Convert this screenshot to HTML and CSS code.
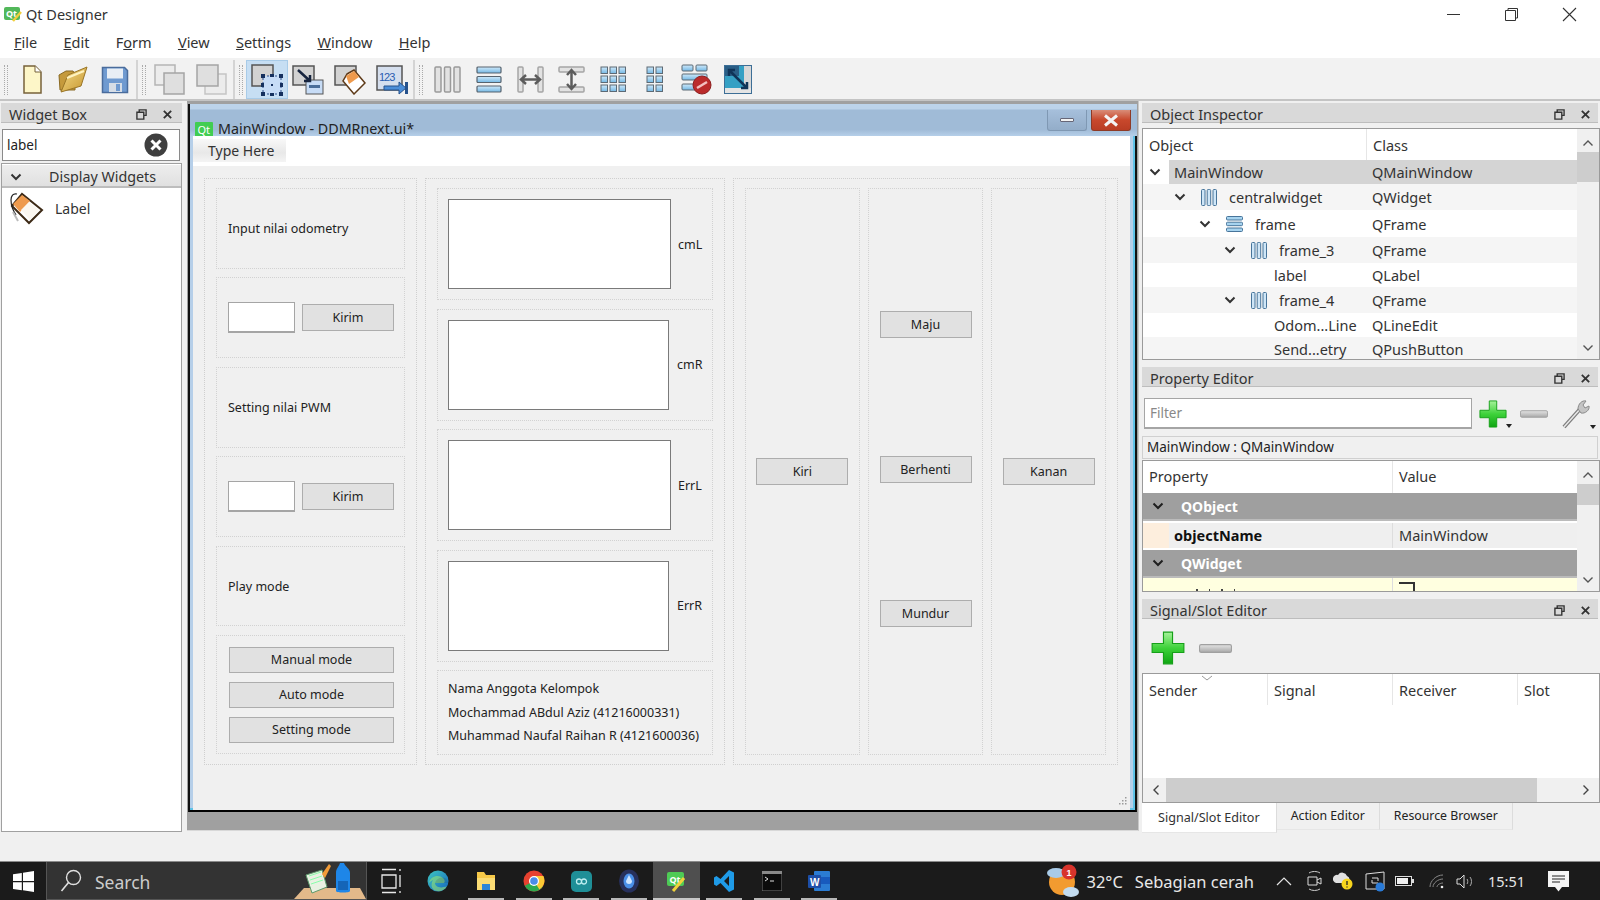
FILE: index.html
```html
<!DOCTYPE html>
<html lang="en">
<head>
<meta charset="utf-8">
<title>Qt Designer</title>
<link rel="stylesheet" href="styles.css">
</head>
<body>
<svg class="defs" aria-hidden="true">
  <defs>
    <linearGradient id="gGreen" x1="0" y1="0" x2="0" y2="1"><stop offset="0" stop-color="#a6f29a"/><stop offset=".5" stop-color="#3ed23a"/><stop offset="1" stop-color="#0fa512"/></linearGradient>
    <linearGradient id="gBar" x1="0" y1="0" x2="0" y2="1"><stop offset="0" stop-color="#e4e4e4"/><stop offset="1" stop-color="#a8a8a8"/></linearGradient>
    <linearGradient id="gBlue" x1="0" y1="0" x2="0" y2="1"><stop offset="0" stop-color="#cfe9fa"/><stop offset="1" stop-color="#74b8e4"/></linearGradient>
    <linearGradient id="gFold" x1="0" y1="0" x2="1" y2="1"><stop offset="0" stop-color="#f5dc8a"/><stop offset="1" stop-color="#c6952d"/></linearGradient>
    <linearGradient id="gEdge" x1="0" y1="0" x2="1" y2="1"><stop offset="0" stop-color="#3ec7c0"/><stop offset="1" stop-color="#1565c0"/></linearGradient>
    <symbol id="i-plus" viewBox="0 0 30 30"><path d="M11 1h8v10h10v8H19v10h-8V19H1v-8h10z" fill="url(#gGreen)" stroke="#16a018"/></symbol>
    <symbol id="i-minus" viewBox="0 0 30 8"><rect x=".5" y=".5" width="29" height="7" rx="1.5" fill="url(#gBar)" stroke="#a0a0a0"/></symbol>
    <symbol id="i-chev" viewBox="0 0 12 8"><path d="M1.5 1.5 6 6l4.500-4.500" fill="none" stroke="#333" stroke-width="2"/></symbol>
    <symbol id="i-up" viewBox="0 0 12 8"><path d="M1.5 6.5 6 2l4.500 4.500" fill="none" stroke="#555" stroke-width="1.4"/></symbol>
    <symbol id="i-down" viewBox="0 0 12 8"><path d="M1.5 1.5 6 6l4.500-4.500" fill="none" stroke="#555" stroke-width="1.4"/></symbol>
    <symbol id="i-left" viewBox="0 0 8 12"><path d="M6.5 1.5 2 6l4.500 4.500" fill="none" stroke="#444" stroke-width="1.4"/></symbol>
    <symbol id="i-right" viewBox="0 0 8 12"><path d="M1.5 1.5 6 6l-4.500 4.500" fill="none" stroke="#444" stroke-width="1.4"/></symbol>
    <symbol id="i-float" viewBox="0 0 12 12"><path d="M3.500 3V1h7.500v6H9M1 3.500h7.500V11H1z" fill="none" stroke="#333" stroke-width="1.500"/></symbol>
    <symbol id="i-close" viewBox="0 0 12 12"><path d="M2 2l8 8M10 2l-8 8" fill="none" stroke="#333" stroke-width="2"/></symbol>
    <symbol id="i-hl" viewBox="0 0 16 17"><g fill="#cfe6f7" stroke="#47749a"><rect x=".5" y=".5" width="3.500" height="16" rx="1"/><rect x="6.200" y=".5" width="3.500" height="16" rx="1"/><rect x="12" y=".5" width="3.500" height="16" rx="1"/></g></symbol>
    <symbol id="i-vl" viewBox="0 0 17 16"><g fill="#a6d3ef" stroke="#47749a"><rect x=".5" y=".5" width="16" height="3.500" rx="1"/><rect x=".5" y="6.200" width="16" height="3.500" rx="1"/><rect x=".5" y="12" width="16" height="3.500" rx="1"/></g></symbol>
    <symbol id="i-tag" viewBox="0 0 36 36"><path d="M4 16 14 4 34 20 21 33z" fill="#fff" stroke="#3d2a16" stroke-width="2"/><path d="M5 14 14 5 22 11 12 22z" fill="#ee9a4d"/><path d="M13 20 21 12 31 20 22 30z" fill="#fbf7f0"/><path d="M9 4C5 3 3 6 3 10s1 9 5 15" fill="none" stroke="#222" stroke-width="1.200"/><path d="M5 22l5 9" stroke="#bbb" stroke-width="2"/></symbol>
  </defs>
</svg>

<header class="titlebar">
  <svg class="app-ic" viewBox="0 0 18 16"><rect x="0" y="1" width="16" height="13" rx="2" fill="#52b85a"/><text x="2" y="11" class="qt-txt">Qt</text><path d="M9 15l8-9" stroke="#f0cf3d" stroke-width="2.500"/></svg>
  <span class="app-name">Qt Designer</span>
  <span class="fill"></span>
  <span class="wbtn"><svg width="15" height="15" viewBox="0 0 15 15"><path d="M1 7.500h13" stroke="#333"/></svg></span>
  <span class="wbtn"><svg width="15" height="15" viewBox="0 0 15 15"><path d="M1.500 3.500h10v10h-10zM4 3.500V1.500h9.500v9.500h-2" fill="none" stroke="#333"/></svg></span>
  <span class="wbtn"><svg width="15" height="15" viewBox="0 0 15 15"><path d="M1 1l13 13M14 1 1 14" stroke="#333" stroke-width="1.100"/></svg></span>
</header>

<nav class="menubar">
  <span><u>F</u>ile</span><span><u>E</u>dit</span><span>F<u>o</u>rm</span><span><u>V</u>iew</span><span><u>S</u>ettings</span><span><u>W</u>indow</span><span><u>H</u>elp</span>
</nav>

<div class="toolbar">
  <div class="tgroup">
    <i class="grip"></i>
    <span class="tool"><svg width="20" height="30" viewBox="0 0 20 30"><path d="M2 1h11l6 6v21H2z" fill="#fdf6c8" stroke="#77623a" stroke-width="1.500"/><path d="M13 1v6h6" fill="#fff" stroke="#77623a"/></svg></span>
    <span class="tool"><svg width="32" height="30" viewBox="0 0 32 30"><path d="M2 10 9 6h7l2 3v16H3z" fill="#c59a3c" stroke="#8a6a24"/><path d="M4 27 11 10 30 2l-6 19z" fill="url(#gFold)" stroke="#9a7526"/><path d="M10 13 27 6" stroke="#fff3c0" stroke-width="2"/></svg></span>
    <span class="tool"><svg width="28" height="28" viewBox="0 0 28 28"><path d="M1.500 1.500h22l3 3v22h-25z" fill="#6f9ad0" stroke="#4a6c9c" stroke-width="1.500"/><rect x="6" y="2.500" width="16" height="10" fill="#e8eef5"/><rect x="8" y="17" width="13" height="9" fill="#d6dde6"/><rect x="15" y="18" width="4" height="7" fill="#6f9ad0"/></svg></span>
  </div>
  <div class="tgroup">
    <i class="grip"></i>
    <span class="tool"><svg width="31" height="31" viewBox="0 0 31 31"><rect x="1" y="1" width="20" height="20" fill="#ececec" stroke="#b5b5b5" stroke-width="1.500"/><rect x="10" y="9" width="20" height="21" fill="#dfdfdf" stroke="#a5a5a5" stroke-width="1.500"/></svg></span>
    <span class="tool"><svg width="31" height="31" viewBox="0 0 31 31"><rect x="9" y="10" width="21" height="20" fill="#ececec" stroke="#c5c5c5" stroke-width="1.500"/><rect x="1" y="1" width="21" height="21" fill="#dfdfdf" stroke="#a5a5a5" stroke-width="1.500"/></svg></span>
  </div>
  <div class="tgroup">
    <i class="grip"></i>
    <span class="tool on"><svg width="32" height="32" viewBox="0 0 32 32"><rect x="1" y="1" width="21" height="21" fill="#d2d2d2" stroke="#555" stroke-width="1.500"/><rect x="12" y="12" width="18" height="18" fill="#c7dcf6" stroke="#2d4f8a" stroke-dasharray="2 2"/><g fill="#15305e"><rect x="10" y="10" width="4" height="4"/><rect x="19" y="10" width="4" height="3"/><rect x="28" y="10" width="4" height="4"/><rect x="10" y="19" width="3" height="4"/><rect x="29" y="19" width="3" height="4"/><rect x="10" y="28" width="4" height="4"/><rect x="19" y="29" width="4" height="3"/><rect x="28" y="28" width="4" height="4"/><rect x="20" y="20" width="2" height="2"/></g></svg></span>
    <span class="tool"><svg width="32" height="30" viewBox="0 0 32 30"><rect x="1" y="1" width="21" height="19" fill="#d2d2d2" stroke="#555" stroke-width="1.500"/><rect x="14" y="15" width="17" height="14" fill="#c7dcf6" stroke="#555"/><rect x="17" y="20" width="11" height="3" fill="#4a6e9a"/><path d="M6 5 18 16M18 10v6h-6" fill="none" stroke="#16243e" stroke-width="2.500"/></svg></span>
    <span class="tool"><svg width="32" height="30" viewBox="0 0 32 30"><rect x="1" y="1" width="21" height="19" fill="#d2d2d2" stroke="#555" stroke-width="1.500"/><path d="M13 9 20 5 31 18 20 29 9 16z" fill="#fff" stroke="#5e3a18" stroke-width="1.500"/><path d="M12 11 20 6 25 12 15 19z" fill="#ee9a4d"/></svg></span>
    <span class="tool"><svg width="32" height="30" viewBox="0 0 32 30"><rect x="1" y="1" width="25" height="24" fill="#d5dfee" stroke="#555" stroke-width="1.500"/><text x="3" y="16" class="tab-txt">123</text><path d="M8 21h15v-4l7 6-7 6v-4H8z" fill="#4c8ed8" stroke="#26528c"/><rect x="29" y="17" width="3" height="12" fill="#26528c"/></svg></span>
  </div>
  <div class="tgroup last">
    <i class="grip"></i>
    <span class="tool"><svg width="27" height="27" viewBox="0 0 27 27"><g fill="#e2e2e2" stroke="#9a9a9a" stroke-width="1.500"><rect x="1" y="1" width="6" height="25" rx="1"/><rect x="10.500" y="1" width="6" height="25" rx="1"/><rect x="20" y="1" width="6" height="25" rx="1"/></g></svg></span>
    <span class="tool"><svg width="26" height="27" viewBox="0 0 26 27"><g fill="url(#gBlue)" stroke="#56636e" stroke-width="1.200"><rect x="1" y="1" width="24" height="6" rx="1"/><rect x="1" y="10.500" width="24" height="6" rx="1"/><rect x="1" y="20" width="24" height="6" rx="1"/></g></svg></span>
    <span class="tool"><svg width="27" height="27" viewBox="0 0 27 27"><g fill="#e2e2e2" stroke="#a5a5a5" stroke-width="1.500"><rect x="1" y="1" width="5" height="25" rx="1"/><rect x="21" y="1" width="5" height="25" rx="1"/></g><path d="M5 13.500h17M9 9l-5 4.500L9 18M18 9l5 4.500L18 18" fill="none" stroke="#5c5c5c" stroke-width="2.500"/></svg></span>
    <span class="tool"><svg width="27" height="27" viewBox="0 0 27 27"><g fill="#e2e2e2" stroke="#a5a5a5" stroke-width="1.500"><rect x="1" y="1" width="25" height="5" rx="1"/><rect x="1" y="21" width="25" height="5" rx="1"/></g><path d="M13.500 5v17M9 9l4.500-5L18 9M9 18l4.500 5L18 18" fill="none" stroke="#5c5c5c" stroke-width="2.500"/></svg></span>
    <span class="tool"><svg width="27" height="27" viewBox="0 0 27 27"><g fill="url(#gBlue)" stroke="#5d6a75"><rect x="1" y="1" width="6.500" height="6.500"/><rect x="10" y="1" width="6.500" height="6.500"/><rect x="19" y="1" width="6.500" height="6.500"/><rect x="1" y="10" width="6.500" height="6.500"/><rect x="10" y="10" width="6.500" height="6.500"/><rect x="19" y="10" width="6.500" height="6.500"/><rect x="1" y="19" width="6.500" height="6.500"/><rect x="10" y="19" width="6.500" height="6.500"/><rect x="19" y="19" width="6.500" height="6.500"/></g></svg></span>
    <span class="tool"><svg width="18" height="27" viewBox="0 0 18 27"><g fill="url(#gBlue)" stroke="#5d6a75"><rect x="1" y="1" width="6.500" height="6.500"/><rect x="10" y="1" width="6.500" height="6.500"/><rect x="1" y="10" width="6.500" height="6.500"/><rect x="10" y="10" width="6.500" height="6.500"/><rect x="1" y="19" width="6.500" height="6.500"/><rect x="10" y="19" width="6.500" height="6.500"/></g></svg></span>
    <span class="tool"><svg width="31" height="31" viewBox="0 0 31 31"><g fill="url(#gBlue)" stroke="#5d6a75"><rect x="1" y="1" width="11" height="6" rx="1"/><rect x="15" y="1" width="11" height="6" rx="1"/><rect x="1" y="10" width="25" height="6" rx="1"/><rect x="1" y="20" width="14" height="6" rx="1"/></g><circle cx="21" cy="21" r="9" fill="#bb2b2b" stroke="#8d1f1f"/><path d="M16 24l10-6" stroke="#f3c0c0" stroke-width="2.500"/></svg></span>
    <span class="tool"><svg width="28" height="29" viewBox="0 0 28 29"><rect x=".5" y=".5" width="27" height="28" fill="#d8d8d8" stroke="#3c6e96"/><rect x="1" y="1" width="19" height="22" fill="#35a0c4"/><rect x="1" y="1" width="14" height="10" fill="#2a5e86"/><rect x="1" y="23" width="26" height="5" fill="#e4e4e4"/><path d="M5 5l18 18M5 11V5h6M23 17v6h-6" fill="none" stroke="#103458" stroke-width="2.500"/></svg></span>
  </div>
</div>

<main class="workspace">
  <aside class="leftdock">
    <div class="docktitle"><span>Widget Box</span><svg class="dk" width="11" height="11"><use href="#i-float"/></svg><svg class="dk" width="11" height="11"><use href="#i-close"/></svg></div>
    <div class="searchbox">
      <span>label</span>
      <svg width="24" height="24" viewBox="0 0 24 24"><circle cx="12" cy="12" r="11.500" fill="#3f3f3f"/><path d="M7.500 7.500l9 9M16.500 7.500l-9 9" stroke="#fff" stroke-width="3"/></svg>
    </div>
    <div class="boxlist">
      <div class="cathead"><svg width="12" height="8"><use href="#i-chev"/></svg><span>Display Widgets</span></div>
      <div class="boxitem"><svg width="36" height="36"><use href="#i-tag"/></svg><span>Label</span></div>
    </div>
  </aside>

  <section class="mdi">
    <div class="subwin">
      <div class="subtitle">
        <svg class="qtbadge" width="18" height="15" viewBox="0 0 18 15"><rect width="18" height="15" rx="1" fill="#41cd52"/><text x="2.500" y="11.500" class="qt-txt2">Qt</text></svg>
        <span class="subname">MainWindow - DDMRnext.ui*</span>
        <span class="fill"></span>
        <span class="subbtn min"><i></i></span>
        <span class="subbtn cls"><svg width="16" height="13" viewBox="0 0 16 13"><path d="M2 1.500l12 10M14 1.500l-12 10" stroke="#f4f4f4" stroke-width="3"/></svg></span>
      </div>
      <div class="client">
        <div class="formmenu"><span>Type Here</span></div>
        <div class="form">
          <div class="frame col-a">
            <div class="sub"><span>Input nilai odometry</span></div>
            <div class="sub row"><span class="line"></span><span class="btn">Kirim</span></div>
            <div class="sub"><span>Setting nilai PWM</span></div>
            <div class="sub row"><span class="line"></span><span class="btn">Kirim</span></div>
            <div class="sub"><span>Play mode</span></div>
            <div class="sub modes"><span class="btn wide">Manual mode</span><span class="btn wide">Auto mode</span><span class="btn wide">Setting mode</span></div>
          </div>
          <div class="frame col-b">
            <div class="plot"><span class="box"></span><span>cmL</span></div>
            <div class="plot"><span class="box narrow"></span><span>cmR</span></div>
            <div class="plot"><span class="box"></span><span>ErrL</span></div>
            <div class="plot"><span class="box narrow"></span><span>ErrR</span></div>
            <div class="names"><p>Nama Anggota Kelompok</p><p>Mochammad ABdul Aziz (41216000331)</p><p>Muhammad Naufal Raihan R (4121600036)</p></div>
          </div>
          <div class="frame col-c">
            <div class="pad"><span class="btn">Kiri</span></div>
            <div class="pad mid"><span class="btn">Maju</span><span class="btn">Berhenti</span><span class="btn">Mundur</span></div>
            <div class="pad"><span class="btn">Kanan</span></div>
          </div>
          <svg class="sizegrip" width="10" height="11" viewBox="0 0 10 11"><g fill="#9a9a9a"><rect x="8" y="1" width="1.500" height="1.500"/><rect x="5" y="4" width="1.500" height="1.500"/><rect x="8" y="4" width="1.500" height="1.500"/><rect x="2" y="7" width="1.500" height="1.500"/><rect x="5" y="7" width="1.500" height="1.500"/><rect x="8" y="7" width="1.500" height="1.500"/></g></svg>
        </div>
      </div>
    </div>
  </section>

  <aside class="rightdock">
    <div class="docktitle"><span>Object Inspector</span><svg class="dk" width="11" height="11"><use href="#i-float"/></svg><svg class="dk" width="11" height="11"><use href="#i-close"/></svg></div>
    <div class="view tree">
      <div class="vmain">
        <div class="thead"><span class="c1">Object</span><span class="c2">Class</span></div>
        <div class="trow sel"><span class="c1 d0"><svg class="chev" width="12" height="8"><use href="#i-chev"/></svg><b class="nm">MainWindow</b></span><span class="c2">QMainWindow</span></div>
        <div class="trow alt"><span class="c1 d1"><svg class="chev" width="12" height="8"><use href="#i-chev"/></svg><svg class="lic" width="16" height="17"><use href="#i-hl"/></svg><b class="nm">centralwidget</b></span><span class="c2">QWidget</span></div>
        <div class="trow"><span class="c1 d2"><svg class="chev" width="12" height="8"><use href="#i-chev"/></svg><svg class="lic" width="17" height="16"><use href="#i-vl"/></svg><b class="nm">frame</b></span><span class="c2">QFrame</span></div>
        <div class="trow alt"><span class="c1 d3"><svg class="chev" width="12" height="8"><use href="#i-chev"/></svg><svg class="lic" width="16" height="17"><use href="#i-hl"/></svg><b class="nm">frame_3</b></span><span class="c2">QFrame</span></div>
        <div class="trow"><span class="c1 leaf">label</span><span class="c2">QLabel</span></div>
        <div class="trow alt"><span class="c1 d3"><svg class="chev" width="12" height="8"><use href="#i-chev"/></svg><svg class="lic" width="16" height="17"><use href="#i-hl"/></svg><b class="nm">frame_4</b></span><span class="c2">QFrame</span></div>
        <div class="trow"><span class="c1 leaf">Odom...Line</span><span class="c2">QLineEdit</span></div>
        <div class="trow alt"><span class="c1 leaf">Send...etry</span><span class="c2">QPushButton</span></div>
      </div>
      <div class="vscroll"><svg width="12" height="8"><use href="#i-up"/></svg><i class="thumb t1"></i><span class="fill"></span><svg width="12" height="8"><use href="#i-down"/></svg></div>
    </div>

    <div class="docktitle second"><span>Property Editor</span><svg class="dk" width="11" height="11"><use href="#i-float"/></svg><svg class="dk" width="11" height="11"><use href="#i-close"/></svg></div>
    <div class="filterrow">
      <span class="filter">Filter</span>
      <span class="pe-ic"><svg width="28" height="28"><use href="#i-plus"/></svg><i class="drop"></i></span>
      <span class="pe-ic minus"><svg width="28" height="8"><use href="#i-minus"/></svg></span>
      <span class="pe-ic wrench"><svg width="30" height="30" viewBox="0 0 30 30"><path d="M3 28 20 9" stroke="#7d7d7d" stroke-width="4"/><path d="M3 28 20 9" stroke="#e8e8e8" stroke-width="1.500"/><path d="M17 10c0-5 4-9 8-8l-3 4 2 3 4-2c1 4-4 8-8 7z" fill="#c4c4c4" stroke="#8a8a8a"/></svg><i class="drop"></i></span>
    </div>
    <div class="objlabel">MainWindow : QMainWindow</div>
    <div class="view props">
      <div class="vmain">
        <div class="thead"><span class="p1">Property</span><span class="p2">Value</span></div>
        <div class="group"><svg width="12" height="8"><use href="#i-chev"/></svg><b>QObject</b></div>
        <div class="prow"><i class="swatch"></i><b class="pname">objectName</b><span class="pval">MainWindow</span></div>
        <div class="group"><svg width="12" height="8"><use href="#i-chev"/></svg><b>QWidget</b></div>
        <div class="prow yellow"><span class="clip"><i></i><i></i><i></i><i></i></span><span class="pval"><i class="check"></i></span></div>
      </div>
      <div class="vscroll"><svg width="12" height="8"><use href="#i-up"/></svg><i class="thumb t2"></i><span class="fill"></span><svg width="12" height="8"><use href="#i-down"/></svg></div>
    </div>

    <div class="docktitle third"><span>Signal/Slot Editor</span><svg class="dk" width="11" height="11"><use href="#i-float"/></svg><svg class="dk" width="11" height="11"><use href="#i-close"/></svg></div>
    <div class="sigtools"><svg width="34" height="34"><use href="#i-plus"/></svg><svg width="33" height="9"><use href="#i-minus"/></svg></div>
    <div class="view sig">
      <div class="sighead">
        <span>Sender<svg class="sort" width="12" height="6" viewBox="0 0 12 6"><path d="M1 1l5 4 5-4" fill="none" stroke="#999"/></svg></span>
        <span>Signal</span><span>Receiver</span><span>Slot</span>
      </div>
      <div class="hscroll"><svg width="8" height="12"><use href="#i-left"/></svg><i class="hthumb"></i><span class="fill"></span><svg width="8" height="12"><use href="#i-right"/></svg></div>
    </div>
    <div class="tabs"><span class="tab active">Signal/Slot Editor</span><span class="tab">Action Editor</span><span class="tab">Resource Browser</span></div>
  </aside>
</main>

<footer class="taskbar">
  <span class="startbtn"><svg width="21" height="21" viewBox="0 0 21 21"><path d="M0 3.200 8.800 2v8H0zM10 1.800 21 0v10H10zM0 11.200h8.800v8L0 18zM10 11.200h11V21l-11-1.700z" fill="#fff"/></svg></span>
  <div class="search">
    <svg class="mag" width="22" height="24" viewBox="0 0 22 24"><circle cx="13.500" cy="8.500" r="7" fill="none" stroke="#e0e0e0" stroke-width="1.400"/><path d="M8.500 13.500 1.500 22" stroke="#e0e0e0" stroke-width="1.600"/></svg>
    <span class="stext">Search</span>
    <svg class="illus" width="72" height="38" viewBox="0 0 72 38"><path d="M0 38 10 27H66l6 11z" fill="#e2b98a"/><path d="M12 14 28 9l5 17-15 6z" fill="#e9f1e2" stroke="#5c9a6c"/><path d="M15 15l12-4M16 19l12-4M17 23l12-4" stroke="#8fa" stroke-width="1"/><path d="M28 13l7-10 2 2-6 12z" fill="#f29c38"/><path d="M42 30V12c0-5 3-6 4-10h4c1 4 6 5 6 10v18c0 2-14 2-14 0z" fill="#1e86e8"/><rect x="44" y="20" width="10" height="9" fill="#1565b8"/></svg>
  </div>
  <span class="task"><svg width="20" height="26" viewBox="0 0 20 26"><path d="M1 1.500h14M1 24.500h14M1 7h14v13H1z" fill="none" stroke="#e8e8e8" stroke-width="1.300"/><path d="M19 1v2M19 7v12M19 23v2" stroke="#e8e8e8" stroke-width="1.300"/></svg></span>
  <span class="task"><svg width="22" height="22" viewBox="0 0 22 22"><circle cx="11" cy="11" r="10.500" fill="url(#gEdge)"/><path d="M2 13C3 6 12 4 16 8c2 2 2 4 1 5H8c0 4 6 6 12 3-3 6-10 6-13 4-3-2-3-7-1-10-2 1-3 2-4 3z" fill="#9be86e" opacity=".55"/><path d="M8 13h13c0-1-1-4-3-5-2-1-8-1-10 5z" fill="#1b1b1b" opacity=".12"/></svg></span>
  <span class="task run"><svg width="20" height="20" viewBox="0 0 20 20"><path d="M1 1h7l2 3h9v15H1z" fill="#f7c948"/><rect x="1" y="7" width="18" height="12" fill="#fbdc74"/><rect x="6" y="13" width="8" height="6" fill="#2d85d8"/></svg></span>
  <span class="task run"><svg width="22" height="22" viewBox="0 0 22 22"><circle cx="11" cy="11" r="10.500" fill="#e6412f"/><path d="M11 11 1.800 15.800A10.500 10.500 0 0 0 11 21.500z" fill="#2da94f"/><path d="M11 11l9.200 4.800A10.500 10.500 0 0 1 11 21.500z" fill="#2da94f"/><path d="M11 6h9.400a10.500 10.500 0 0 1-4 13.500L11 11z" fill="#fcc934"/><circle cx="11" cy="11" r="5" fill="#fff"/><circle cx="11" cy="11" r="3.800" fill="#4a8ce8"/></svg></span>
  <span class="task run"><svg width="21" height="21" viewBox="0 0 21 21"><rect width="21" height="21" rx="5" fill="#1f8f97"/><path d="M5.500 10.500a2.500 2.500 0 1 1 5 0 2.500 2.500 0 1 1 5 0 2.500 2.500 0 1 1-5 0 2.500 2.500 0 1 1-5 0" fill="none" stroke="#bfeef0" stroke-width="1.300"/></svg></span>
  <span class="task run"><svg width="22" height="24" viewBox="0 0 22 24"><ellipse cx="11" cy="12" rx="10" ry="11.500" fill="#27305c"/><ellipse cx="11" cy="12" rx="5.500" ry="7.500" fill="#4a8fe8"/><path d="M11 6l3 6a3 3 0 1 1-6 0z" fill="#cfe5ff"/></svg></span>
  <span class="task active run"><svg width="20" height="22" viewBox="0 0 20 22"><rect x="1" y="2" width="17" height="14" rx="2" fill="#4ecb55"/><text x="3.500" y="12.500" class="qt-txt">Qt</text><path d="M7 21l11-13" stroke="#f0d23c" stroke-width="3"/></svg></span>
  <span class="task run"><svg width="20" height="22" viewBox="0 0 20 22"><path d="M15 0 6.500 9 2.500 6 0 7.500v7L2.500 16l4-3L15 22l5-2.500v-17zM15 6v10l-5-5z" fill="#1f9be8"/></svg></span>
  <span class="task run"><svg width="20" height="20" viewBox="0 0 20 20"><rect width="20" height="20" rx="1" fill="#0c0c0c" stroke="#777"/><rect y="0" width="20" height="3" fill="#888"/><path d="M3 6l3 2-3 2M8 10h4" stroke="#ddd" fill="none"/></svg></span>
  <span class="task run"><svg width="22" height="20" viewBox="0 0 22 20"><rect x="6" y="0" width="16" height="20" rx="1" fill="#2b7cd3"/><rect x="6" y="6" width="16" height="7" fill="#185abd"/><rect x="0" y="4" width="13" height="13" rx="1" fill="#1d4fa8"/><text x="2" y="14.500" class="w-txt">W</text></svg></span>
  <span class="fill"></span>
  <div class="weather">
    <svg width="34" height="34" viewBox="0 0 34 34"><circle cx="17" cy="18" r="13" fill="#f29b30"/><ellipse cx="11" cy="9" rx="9" ry="5" fill="#a9cbe8"/><ellipse cx="26" cy="28" rx="8" ry="5" fill="#c3dcf0"/><circle cx="24" cy="8" r="7.500" fill="#d8342c"/><text x="21.500" y="11.500" class="badge-txt">1</text></svg>
    <span class="temp">32°C</span><span class="cond">Sebagian cerah</span>
  </div>
  <div class="tray">
    <svg class="t-chev" width="16" height="9" viewBox="0 0 16 9"><path d="M1 8l7-7 7 7" fill="none" stroke="#e4e4e4" stroke-width="1.200"/></svg>
    <svg class="t-meet" width="15" height="22" viewBox="0 0 15 22"><path d="M2 3c3-2 8-2 11 0M2 19c3 2 8 2 11 0" fill="none" stroke="#ccc"/><path d="M1 7h9v8H1zM10 10l4-2v6l-4-2" fill="none" stroke="#ddd"/></svg>
    <svg class="t-drive" width="21" height="18" viewBox="0 0 21 18"><path d="M3 11a4 4 0 0 1 2-8 5 5 0 0 1 9 1 4 4 0 0 1 1 7z" fill="#e0e0e0"/><circle cx="14" cy="12" r="5.500" fill="#f7d51d"/><path d="M14 9v4M14 14.500v1" stroke="#222" stroke-width="1.300"/></svg>
    <svg class="t-cast" width="20" height="21" viewBox="0 0 20 21"><path d="M1 3 19 1v17H1z" fill="none" stroke="#ddd"/><path d="M7 7h6v3M13 12H7V9" fill="none" stroke="#ddd"/><circle cx="15" cy="16" r="4.500" fill="#2a7bd8"/></svg>
    <svg class="t-bat" width="19" height="10" viewBox="0 0 19 10"><rect x=".5" y=".5" width="16" height="9" fill="#111" stroke="#ddd"/><rect x="2" y="2" width="11" height="6" fill="#f0f0f0"/><rect x="17" y="3" width="2" height="4" fill="#ddd"/></svg>
    <svg class="t-wifi" width="15" height="15" viewBox="0 0 15 15"><path d="M1 13C1 7 7 1 14 1M4 13c0-4 5-8 10-8M8 13c0-2 3-4 6-4" fill="none" stroke="#888"/><circle cx="13" cy="13" r="1.300" fill="#eee"/></svg>
    <svg class="t-vol" width="17" height="15" viewBox="0 0 17 15"><path d="M1 5h3l4-4v13l-4-4H1z" fill="none" stroke="#ddd"/><path d="M11 5c1 1 1 4 0 5M14 3c2 2 2 7 0 9" fill="none" stroke="#aaa"/></svg>
    <span class="clock">15:51</span>
    <svg class="t-note" width="21" height="21" viewBox="0 0 21 21"><path d="M0 0h21v16h-7l-3.500 4.500L7 16H0z" fill="#f4f4f4"/><path d="M4 5h13M4 8h13M4 11h8" stroke="#222"/></svg>
  </div>
</footer>
</body>
</html>
```
FILE: styles.css
```css
* { box-sizing: border-box; }
html, body { margin: 0; padding: 0; }
body {
  width: 1600px; height: 900px; overflow: hidden; display: flex; flex-direction: column;
  background: #f0f0f0; color: #222; font-family: "Noto Sans", "Open Sans", sans-serif; font-size: 14px;
}
.defs { display: block; width: 0; height: 0; }
.fill { flex: 1; }
i { display: block; font-style: normal; }
b { font-weight: 400; }
svg { flex: none; display: block; }
.qt-txt { font: 700 9px "Noto Sans", sans-serif; fill: #fff; }
.qt-txt2 { font: 400 11px "Noto Sans", sans-serif; fill: #fff; }
.tab-txt { font: 400 11px "Liberation Sans", sans-serif; fill: #2a5cb0; letter-spacing: -1px; }
.w-txt { font: 700 10px "Liberation Sans", sans-serif; fill: #fff; }
.badge-txt { font: 700 9px "Liberation Sans", sans-serif; fill: #fff; }

.titlebar { height: 28px; background: #fff; display: flex; align-items: center; padding-left: 4px; flex: none; }
.app-ic { width: 18px; height: 16px; }
.app-name { margin-left: 4px; font-size: 14.500px; color: #333; }
.wbtn { width: 58px; height: 28px; display: flex; align-items: center; justify-content: center; }
.titlebar .wbtn:last-child { margin-right: 2px; }

.menubar { height: 30px; background: #fff; display: flex; align-items: center; gap: 26.300px; padding: 0 0 2px 14px; font-size: 14.500px; flex: none; color: #333; }

.toolbar { height: 43px; background: #f2f2f2; border-bottom: 2px solid #c4c4c4; display: flex; flex: none; padding-top: 2px; }
.tgroup { display: flex; align-items: center; border-right: 2px solid #d4d4d4; height: 39px; }
.tgroup:nth-child(2) { padding-right: 1px; }
.tgroup:nth-child(3) { padding-right: 1px; }
.tgroup.last { border-right: 0; }
.grip { width: 4px; height: 30px; margin: 0 3px 0 4px; border-left: 1px dotted #aaa; border-right: 1px dotted #aaa; }
.tool { width: 41.600px; height: 39px; display: flex; align-items: center; justify-content: center; }
.tool.on { background: #c6def3; border: 1px solid #a8cbe8; }

.workspace { flex: 1; display: flex; min-height: 0; }

.docktitle { height: 20px; background: #d9d9d9; border-bottom: 1px solid #bdbdbd; display: flex; align-items: center; padding: 3px 0 0 8px; font-size: 14.500px; color: #333; flex: none; }
.docktitle span { flex: 1; }
.docktitle .dk { margin-right: 15px; }
.rightdock .docktitle .dk:last-child { margin-right: 7px; }
.leftdock .docktitle .dk:last-child { margin-right: 9px; }

.leftdock { width: 187px; padding: 2px 5px 0 1px; display: flex; flex-direction: column; height: 731px; }
.searchbox { height: 32px; margin: 6px 0 0 1px; width: 178px; background: #fff; border: 1px solid #8a8a8a; display: flex; align-items: center; justify-content: space-between; padding: 0 11px 0 4px; font-size: 13.500px; }
.boxlist { flex: 1; margin-top: 2px; background: #fff; border: 1px solid #a0a0a0; padding: 1px 0 0 0; }
.cathead { height: 23px; background: linear-gradient(#ededed, #e0e0e0); border-bottom: 2px solid #bdbdbd; display: flex; align-items: center; padding: 2px 0 0 8px; font-size: 14.300px; color: #333; }
.cathead span { margin-left: 27px; }
.boxitem { display: flex; align-items: center; padding: 2px 0 0 6px; font-size: 14px; color: #333; }
.boxitem span { margin-left: 11px; }

.mdi { width: 952px; height: 730px; background: #a0a0a0; border-bottom: 1px solid #d8d8d8; padding: 3px 0 0 1px; border-right: 1px solid #c8c8c8; flex: none; }
.subwin { width: 949px; height: 708px; background: #b6cfe9; border-left: 2px solid #111; border-right: 2px solid #111; border-bottom: 2px solid #000; box-shadow: inset -2px -2px 0 #5fc3e8; display: flex; flex-direction: column; }
.subtitle { height: 32px; flex: none; background: linear-gradient(#bcd3ea 0, #bcd3ea 5px, #a0bbd7 6px, #a0bbd7 80%, #b6cfe9 100%); display: flex; align-items: flex-end; padding: 0 6px 0 5px; margin-right: -2px; }
.qtbadge { margin-bottom: -1px; }
.subname { margin-left: 5px; font-size: 14.300px; line-height: 20px; margin-bottom: -3px; color: #222; }
.subbtn { width: 40px; height: 21px; margin-bottom: 5px; border: 1px solid #7f98b3; border-top: 0; border-radius: 0 0 3px 3px; display: flex; align-items: center; justify-content: center; }
.subbtn.min { background: linear-gradient(#a6bfdb, #93adc9); margin-right: 4px; }
.subbtn.min i { width: 14px; height: 4px; background: #f2f2f2; border: 1px solid #667; border-radius: 1px; }
.subbtn.cls { background: linear-gradient(#d98d78 0, #c8482c 50%, #b93d24 100%); border-color: #8e3a26; }
.client { flex: 1; margin: 0 5px 0 3px; display: flex; flex-direction: column; min-height: 0; }
.formmenu { height: 30px; background: #fff; padding-top: 3px; flex: none; }
.formmenu span { display: block; width: 93px; height: 23px; line-height: 24px; padding-left: 15px; background: linear-gradient(#f8f8f8, #e8e8e8 60%, #f4f4f4); font-size: 14px; color: #333; }
.form { flex: 1; background: #f0f0f0; padding: 12px 0 0 11px; display: flex; gap: 8px; position: relative; font-family: "Noto Sans", sans-serif; font-size: 12.500px; color: #222; }
.sizegrip { position: absolute; right: 3px; bottom: 3px; }
.frame { height: 587px; border: 1px dotted #cfcfcf; display: flex; padding: 9px 11px; }
.col-a { width: 213px; flex-direction: column; gap: 8.600px; padding-bottom: 10px; }
.col-b { width: 300px; flex-direction: column; gap: 8.500px; }
.col-c { width: 385px; gap: 8.500px; }
.sub { flex: 1; border: 1px dotted #d2d2d2; display: flex; align-items: center; padding-left: 11px; }
.sub.modes { flex: 0 0 119px; flex-direction: column; align-items: flex-start; justify-content: center; gap: 9px; padding-left: 12px; }
.sub.row { gap: 7px; }
.line { width: 67px; height: 31px; background: #fff; border: 1px solid #a5a5a5; border-bottom-width: 2px; }
.btn { width: 92px; height: 27px; background: #e1e1e1; border: 1px solid #adadad; display: flex; align-items: center; justify-content: center; flex: none; }
.btn.wide { width: 165px; height: 26px; }
.plot { flex: 1; border: 1px dotted #d2d2d2; display: flex; align-items: center; padding-left: 10px; gap: 7px; }
.box { width: 223px; height: 90px; background: #fff; border: 1px solid #7a7a7a; flex: none; }
.box.narrow { width: 221px; margin-right: 1px; }
.names { flex: 0 0 85px; border: 1px dotted #d2d2d2; padding-left: 10px; display: flex; flex-direction: column; justify-content: center; }
.names p { margin: 0; line-height: 23.500px; white-space: nowrap; }
.pad { flex: 1; border: 1px dotted #d2d2d2; display: flex; flex-direction: column; align-items: center; justify-content: center; padding-bottom: 1px; }
.pad.mid { gap: 117.500px; padding-bottom: 5px; }

.rightdock { flex: 1; padding: 2px 2px 0 3px; display: flex; flex-direction: column; min-width: 0; color: #333; font-size: 14.500px; }
.view { border: 1px solid #9a9a9a; background: #fff; display: flex; margin-right: -2px; flex: none; }
.tree { height: 232px; margin-top: 5px; }
.vmain { flex: 1; min-width: 0; overflow: hidden; }
.vscroll { width: 22px; background: #f0f0f0; display: flex; flex-direction: column; align-items: center; padding: 10px 0 7px; flex: none; }
.thumb { width: 100%; background: #cdcdcd; }
.t1 { height: 30px; margin-top: 5px; }
.t2 { height: 21px; margin-top: 5px; }
.thead { height: 31px; display: flex; align-items: center; background: #fff; }
.thead span { height: 100%; display: flex; align-items: center; padding-left: 6px; }
.c1 { width: 224px; display: flex; align-items: center; flex: none; white-space: nowrap; }
.c2 { flex: 1; padding-left: 5px; }
.thead .c1 { border-right: 1px solid #e6e6e6; }
.trow { display: flex; align-items: center; height: 26px; background: #fff; }
.trow:nth-child(2) { height: 24px; }
.trow:nth-child(4) { height: 27px; }
.trow:nth-child(6), .trow:nth-child(8) { height: 24px; }
.trow:nth-child(9) { height: 23px; }
.trow.alt { background: #f5f5f5; }
.trow.sel { background: linear-gradient(to right, #fff 26px, #d4d4d4 26px); }
.d0 { padding-left: 6px; }
.d1 { padding-left: 31px; }
.d2 { padding-left: 56px; }
.d3 { padding-left: 81px; }
.leaf { padding-left: 131px; }
.d0 .nm { margin-left: 13px; }
.lic { margin: 0 12px 0 15px; }

.second { margin-top: 7px; }
.filterrow { display: flex; align-items: center; height: 31px; margin-top: 11px; padding-left: 2px; }
.filter { width: 328px; height: 31px; background: #fff; border: 1px solid #a5a5a5; border-bottom-width: 2px; color: #888; padding-left: 5px; font-size: 13.500px; line-height: 28px; }
.pe-ic { display: flex; position: relative; margin-left: 7px; }
.pe-ic.minus { margin-left: 13px; }
.pe-ic.wrench { margin-left: 13px; }
.drop { position: absolute; right: -5px; bottom: 0; width: 0; height: 0; border: 3px solid transparent; border-top: 4px solid #222; border-bottom: 0; }
.objlabel { height: 23px; margin-top: 7px; border: 1px solid #d0d0d0; line-height: 21px; padding-left: 4px; font-size: 13.500px; color: #222; }
.props { height: 132px; margin-top: 1px; }
.props .thead { height: 32px; }
.props .thead span { padding-bottom: 3px; }
.p1 { width: 250px; border-right: 1px solid #e6e6e6; }
.p2 { flex: 1; }
.group { height: 28px; background: #9f9f9f; display: flex; align-items: center; padding-left: 9px; border-bottom: 2px solid #bbb; color: #fff; }
.group svg { filter: brightness(.6); }
.group b { font-weight: 700; margin-left: 17px; font-size: 14px; }
.prow { display: flex; align-items: flex-end; height: 29px; background: #fff; border-bottom: 2px solid #fff; }
.swatch { width: 26px; height: 25px; background: #fdeedd; flex: none; }
.pname { font-weight: 700; width: 224px; padding-left: 5px; color: #111; height: 25px; line-height: 24px; border-right: 1px solid #ddd; flex: none; background: #efefef; }
.pval { padding-left: 6px; flex: 1; height: 25px; line-height: 24px; background: #efefef; }
.prow.yellow { background: #ffffe0; height: 15px; border: 0; overflow: hidden; align-items: flex-start; }
.prow.yellow .pval { background: none; height: 15px; }
.clip { width: 250px; padding-left: 53px; flex: none; border-right: 1px solid #ddd; height: 15px; display: flex; align-items: flex-end; gap: 11px; }
.clip i { width: 1.500px; height: 4px; background: #444; }
.check { width: 16px; height: 10px; margin-top: 4px; border-top: 2px solid #333; border-right: 2px solid #333; }

.third { margin-top: 7px; }
.sigtools { height: 54px; display: flex; align-items: center; gap: 14px; padding: 4px 0 0 9px; flex: none; }
.sig { height: 130px; flex-direction: column; }
.sighead { flex: 1; display: flex; background: #fff; align-items: flex-start; }
.sighead span { width: 125px; flex: none; height: 31px; padding-left: 6px; display: flex; align-items: center; border-right: 1px solid #e6e6e6; position: relative; }
.sighead span:last-child { border: 0; width: 80px; }
.sort { position: absolute; left: 58px; top: 1px; }
.hscroll { height: 24px; background: #f0f0f0; display: flex; align-items: center; padding: 0 9px; }
.hthumb { width: 371px; height: 100%; background: #cdcdcd; margin-left: 6px; }
.tabs { display: flex; height: 30px; font-size: 12.300px; flex: none; }
.tab { display: flex; align-items: center; padding: 0 14px 2px; border-right: 1px solid #dcdcdc; border-bottom: 1px solid #e6e6e6; height: 27px; color: #222; }
.tab.active { background: #fff; height: 30px; padding: 0 16px; color: #333; font-size: 12.600px; }

.taskbar { height: 39px; background: #1b1b1b; border-top: 1px solid #8a8a8a; display: flex; align-items: center; color: #e8e8e8; flex: none; }
.startbtn { width: 46px; height: 100%; display: flex; align-items: center; justify-content: center; }
.search { width: 321px; height: 100%; background: #333; border: 1px solid #555; border-top: 0; display: flex; align-items: center; padding-left: 13px; overflow: hidden; }
.stext { font-size: 17.500px; margin-left: 13px; padding-top: 2px; color: #ccc; flex: 1; }
.illus { align-self: flex-end; }
.task { width: 47.600px; height: 100%; display: flex; align-items: center; justify-content: center; flex: none; }
.task.run { background: linear-gradient(#b8b8b8, #b8b8b8) center bottom / 36px 2px no-repeat; }
.task.active { background: linear-gradient(#c8c8c8, #c8c8c8) center bottom / 100% 2px no-repeat, #4f4f4f; }
.weather { display: flex; align-items: center; }
.temp { font-size: 16.500px; margin-left: 7px; }
.cond { font-size: 16.500px; margin-left: 12px; }
.tray { display: flex; align-items: center; margin-left: 22px; padding-right: 31px; height: 100%; }
.t-meet { margin-left: 15px; }
.t-drive { margin-left: 11px; }
.t-cast { margin-left: 11px; }
.t-bat { margin-left: 10px; }
.t-wifi { margin-left: 15px; }
.t-vol { margin-left: 12px; }
.clock { font-size: 14.500px; margin-left: 15px; }
.t-note { margin-left: 23px; }
```
